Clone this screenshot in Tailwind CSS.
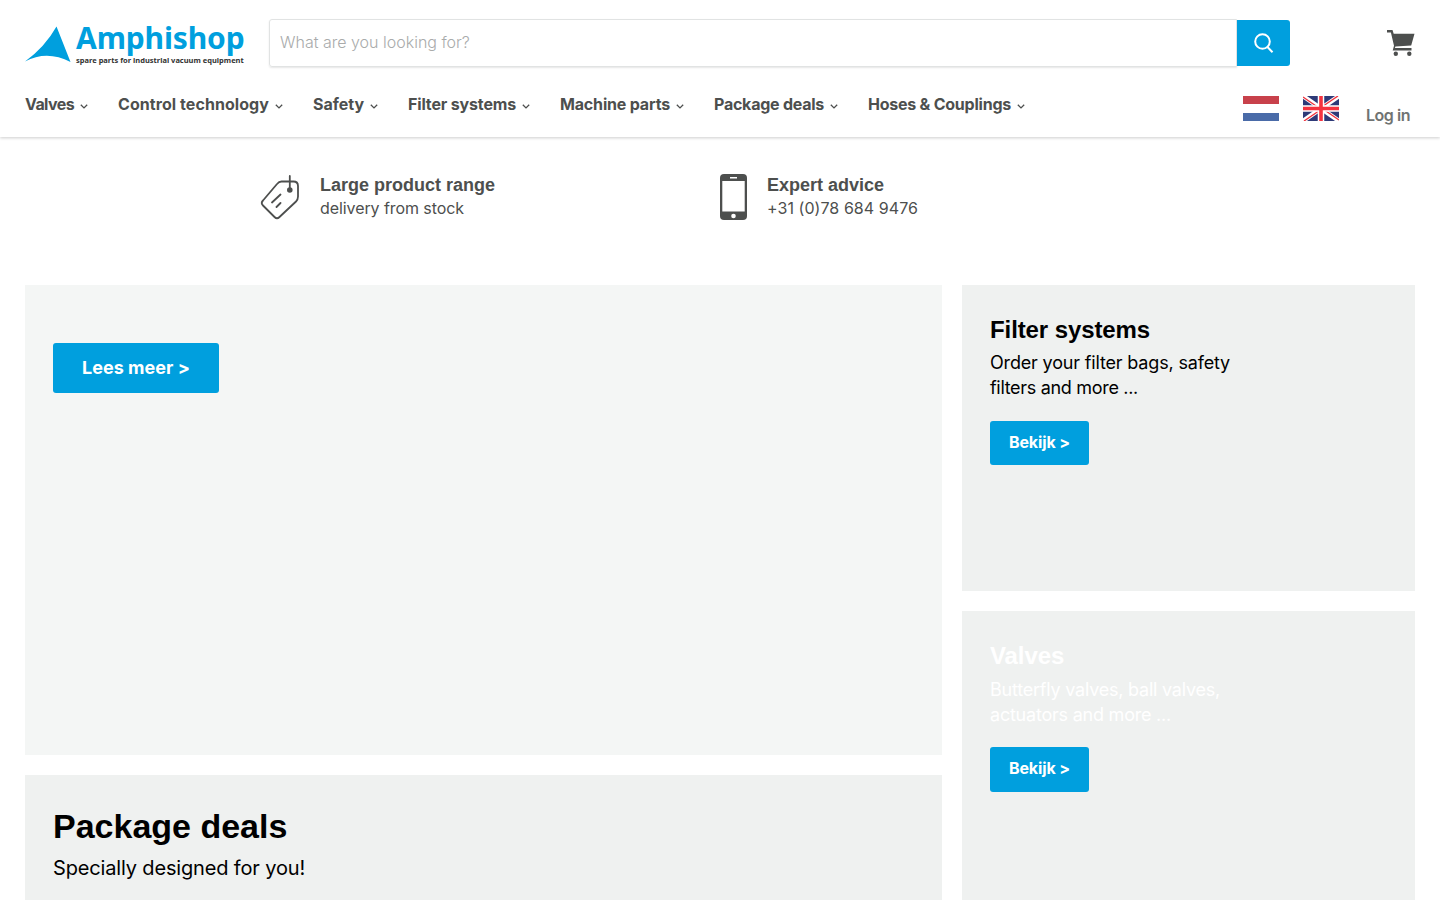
<!DOCTYPE html>
<html lang="en">
<head>
<meta charset="utf-8">
<title>Amphishop</title>
<script src="https://cdn.jsdelivr.net/npm/@tailwindcss/browser@4"></script>
</head>
<body class="bg-white h-[900px] overflow-hidden font-['Inter',sans-serif] text-[16px] text-[#4d4f4e]">
<header class="h-[137px] px-[25px] pt-[19px] shadow-[0_1px_3px_rgba(0,0,0,0.2)]">
  <div class="flex h-12 items-center">
    <a class="flex w-[220px] h-12 mr-6">
      <svg class="w-[46px] h-12 shrink-0" viewBox="0 0 46 48" fill="#009fde"><path d="M31.5 7.5 L45.5 43 Q22 31 0 42.500 Q20 28 31.500 7.500Z"/></svg>
      <div class="ml-[5px] flex flex-col whitespace-nowrap font-['Noto_Sans',sans-serif] font-bold">
        <span class="mt-px h-[35px] text-[30px] leading-[36px] tracking-[-0.13px] text-[#009fde]">Amphishop</span>
        <span class="text-[7.5px] leading-[10px] text-[#333]">spare parts for industrial vacuum equipment</span>
      </div>
    </a>
    <form class="flex h-12 w-[1022px]">
      <div class="flex-1 rounded-l-[3px] border border-[#e1e3e3] pl-[10px] leading-[44px] shadow-[0_1px_2px_rgba(0,0,0,0.1)] font-light text-[#a9abab]">What are you looking for?</div>
      <div class="my-px mr-px flex w-[53px] items-center justify-center rounded-r-[3px] bg-[#009fde]">
        <svg class="size-5" viewBox="0 0 20 20" fill="none" stroke="#fff" stroke-width="2"><circle cx="8.500" cy="8.500" r="7.300"/><path d="M13.500 14l5 5.300"/></svg>
      </div>
    </form>
    <svg class="ml-24 h-[26px] w-[28px]" viewBox="0 0 28 26" fill="#4d4f4e"><path d="M0 0h5.500l1.200 3.800H27.500l-3.300 11.700L8.400 16.400l-.5 1.600H24.500v2.500H5.700L7 15.800 3.900 2.500H0z"/><circle cx="8.800" cy="23.700" r="2.200"/><circle cx="22.300" cy="23.700" r="2.200"/></svg>
  </div>
  <div class="flex justify-between">
    <nav class="mt-[27px] flex h-5 gap-[30px] whitespace-nowrap font-bold leading-5">
      <a class="flex items-center"><span class="w-[55px] tracking-[-0.6px]">Valves</span><svg class="mt-[5px] h-[5px] w-2" viewBox="0 0 8 5" fill="none" stroke="currentColor" stroke-width="1.300"><path d="M.8.700 4 3.900 7.200.7"/></svg></a>
      <a class="flex items-center"><span class="w-[157px] tracking-[0.066px]">Control technology</span><svg class="mt-[5px] h-[5px] w-2" viewBox="0 0 8 5" fill="none" stroke="currentColor" stroke-width="1.300"><path d="M.8.700 4 3.900 7.200.7"/></svg></a>
      <a class="flex items-center"><span class="w-[57px] tracking-[-0.03px]">Safety</span><svg class="mt-[5px] h-[5px] w-2" viewBox="0 0 8 5" fill="none" stroke="currentColor" stroke-width="1.300"><path d="M.8.700 4 3.900 7.200.7"/></svg></a>
      <a class="flex items-center"><span class="w-[114px] tracking-[-0.156px]">Filter systems</span><svg class="mt-[5px] h-[5px] w-2" viewBox="0 0 8 5" fill="none" stroke="currentColor" stroke-width="1.300"><path d="M.8.700 4 3.900 7.200.7"/></svg></a>
      <a class="flex items-center"><span class="w-[116px] tracking-[-0.173px]">Machine parts</span><svg class="mt-[5px] h-[5px] w-2" viewBox="0 0 8 5" fill="none" stroke="currentColor" stroke-width="1.300"><path d="M.8.700 4 3.900 7.200.7"/></svg></a>
      <a class="flex items-center"><span class="w-[116px] tracking-[-0.249px]">Package deals</span><svg class="mt-[5px] h-[5px] w-2" viewBox="0 0 8 5" fill="none" stroke="currentColor" stroke-width="1.300"><path d="M.8.700 4 3.900 7.200.7"/></svg></a>
      <a class="flex items-center"><span class="w-[149px] tracking-[-0.233px]">Hoses &amp; Couplings</span><svg class="mt-[5px] h-[5px] w-2" viewBox="0 0 8 5" fill="none" stroke="currentColor" stroke-width="1.300"><path d="M.8.700 4 3.900 7.200.7"/></svg></a>
    </nav>
    <div class="mt-[29px] mr-[5px] flex items-start">
      <div class="flex h-[25px] w-9 flex-col justify-between"><div class="h-2 bg-[#c8414b]"></div><div class="h-2 bg-[#4a6ba8]"></div></div>
      <svg class="ml-6 h-[25px] w-9" viewBox="0 0 36 25"><path fill="#2e3a78" d="M0 0h36v25H0z"/><path d="M0 0l36 25M36 0L0 25" stroke="#fff" stroke-width="4.500"/><path d="M0 1l16 11M36 24L20 13M35 0L18 11.500M1 25l17-11.500" stroke="#f0323c" stroke-width="1.400"/><path d="M18 0v25M0 12.500h36" stroke="#fff" stroke-width="6.500"/><path d="M18 0v25M0 12.500h36" stroke="#f5333f" stroke-width="3.600"/></svg>
      <span class="ml-[27px] mt-[9px] w-11 whitespace-nowrap font-semibold leading-5 tracking-[-0.47px] text-[#707372]">Log in</span>
    </div>
  </div>
</header>

<section class="flex h-[148px] pl-[260px] pt-[37px]">
  <div class="flex w-[460px]">
    <svg class="h-[46px] w-10" viewBox="0 0 40 46" fill="none" stroke="#4d4f4e" stroke-width="1.800" stroke-linecap="round"><path d="M21.500 7.500h12q4.500 0 4.500 4.500v10.500q0 3-2 5L19.500 43q-2.500 2.500-5 0L3 31.500q-2.500-2.500 0-5L17 10q2-2.500 4.500-2.500zM29.800 2v13M12 28.500l8.500-8M16.500 33l4-4"/><circle cx="29.800" cy="16" r="1.900" fill="#4d4f4e"/></svg>
    <div class="ml-5"><h2 class="font-['Liberation_Sans',sans-serif] text-[18px] font-bold leading-[22px]">Large product range</h2><p class="leading-6 tracking-[-0.078px]">delivery from stock</p></div>
  </div>
  <div class="flex">
    <svg class="h-[46px] w-[27px]" viewBox="0 0 27 46"><rect width="27" height="46" rx="4" fill="#4d4f4e"/><path fill="#fff" d="M2.300 7h22.400v30.500H2.300zM10 3h7v1.500h-7z"/><circle cx="13.500" cy="42" r="2.300" fill="#fff"/></svg>
    <div class="ml-5"><h2 class="font-['Liberation_Sans',sans-serif] text-[18px] font-bold leading-[22px]">Expert advice</h2><p class="leading-6 tracking-[0.059px]">+31 (0)78 684 9476</p></div>
  </div>
</section>

<main class="flex gap-5 px-[25px] text-black">
  <div class="flex w-[917px] flex-col gap-5">
    <section class="h-[470px] bg-[#f4f6f5] px-7 pt-[58px]">
      <a class="flex h-[50px] w-[166px] items-center justify-center rounded-[3px] bg-[#009fde] pb-0.5 text-[18px] font-bold tracking-[0.031px] text-white">Lees meer &gt;</a>
    </section>
    <section class="h-[125px] bg-[#eff1f0] px-7 pt-[31px]">
      <h2 class="font-['Liberation_Sans',sans-serif] text-[34px] font-bold leading-10">Package deals</h2>
      <p class="mt-[7px] text-[20px] leading-[30px] tracking-[-0.156px]">Specially designed for you!</p>
    </section>
  </div>
  <div class="flex w-[453px] flex-col gap-5">
    <section class="h-[306px] bg-[#eff1f0] px-7 pt-[30px]">
      <h2 class="font-['Liberation_Sans',sans-serif] text-[24px] font-bold leading-[30px] tracking-[-0.1px]">Filter systems</h2>
      <p class="mt-[5px] text-[18px] leading-[25px] tracking-[-0.167px]">Order your filter bags, safety<br><span class="tracking-[-0.309px]">filters and more ...</span></p>
      <a class="mt-[21px] flex h-11 w-[99px] items-center justify-center rounded-[3px] bg-[#009fde] pb-0.5 font-bold tracking-[-0.125px] text-white">Bekijk &gt;</a>
    </section>
    <section class="h-[289px] bg-[#eff1f0] px-7 pt-[30px] text-white">
      <h2 class="font-['Liberation_Sans',sans-serif] text-[24px] font-bold leading-[30px] tracking-[-0.1px]">Valves</h2>
      <p class="mt-[6px] text-[18px] leading-[25px] tracking-[-0.221px]">Butterfly valves, ball valves,<br>actuators and more ...</p>
      <a class="mt-[20px] flex h-[45px] w-[99px] items-center justify-center rounded-[3px] bg-[#009fde] pb-[3px] font-bold tracking-[-0.125px] text-white">Bekijk &gt;</a>
    </section>
  </div>
</main>
</body>
</html>
